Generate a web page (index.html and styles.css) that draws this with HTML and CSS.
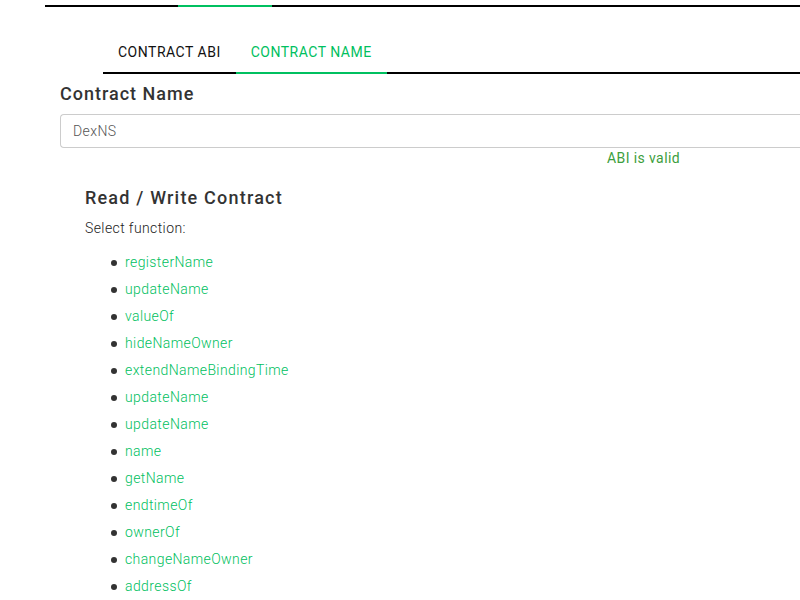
FILE: index.html
```html
<!DOCTYPE html>
<html>
<head>
<meta charset="utf-8">
<link rel="stylesheet" href="styles.css">
</head>
<body>
<div class="topbar"><span class="topbar-active"></span></div>
<div class="page">
  <nav class="tabs">
    <a class="tab">CONTRACT ABI</a>
    <a class="tab tab-active">CONTRACT NAME</a>
  </nav>
  <h2 class="label">Contract Name</h2>
  <div class="input">DexNS</div>
  <div class="valid">ABI is valid</div>
  <section class="contract">
    <h3 class="contract-title">Read / Write Contract</h3>
    <p class="select">Select function:</p>
    <ul class="funcs">
      <li><a>registerName</a></li>
      <li><a>updateName</a></li>
      <li><a>valueOf</a></li>
      <li><a>hideNameOwner</a></li>
      <li><a>extendNameBindingTime</a></li>
      <li><a>updateName</a></li>
      <li><a>updateName</a></li>
      <li><a>name</a></li>
      <li><a>getName</a></li>
      <li><a>endtimeOf</a></li>
      <li><a>ownerOf</a></li>
      <li><a>changeNameOwner</a></li>
      <li><a>addressOf</a></li>
    </ul>
  </section>
</div>
</body>
</html>
```
FILE: styles.css
```css
html, body {
  margin: 0;
  padding: 0;
  background: #fff;
  overflow: hidden;
}
body {
  font-family: Roboto, "Liberation Sans", sans-serif;
  font-weight: 300;
  font-size: 14px;
  letter-spacing: 0.4px;
  color: #222;
  width: 800px;
  height: 600px;
}
.topbar {
  margin: 5px 0 0 45px;
  height: 2px;
  background: #000;
  display: flex;
}
.topbar-active {
  margin-left: 133px;
  width: 94px;
  background: #00c060;
}
.page {
  padding-left: 60px;
}
.tabs {
  margin: 31px 0 0 43px;
  display: flex;
  border-bottom: 2px solid #000;
  height: 34px;
}
.tab {
  padding: 6px 15px 0 15px;
  font-size: 14px;
  font-weight: 400;
  letter-spacing: 0.5px;
  color: #111;
  line-height: 17px;
  border-bottom: 2px solid transparent;
  margin-bottom: -2px;
}
.tab-active {
  color: #00c060;
  border-bottom-color: #00c060;
}
.label {
  margin: 8px 0 0 0;
  font-size: 18px;
  font-weight: 500;
  letter-spacing: 1px;
  color: #333;
  line-height: 24px;
}
.input {
  margin-top: 8px;
  width: 760px;
  height: 32px;
  box-sizing: content-box;
  border: 1px solid #ccc;
  border-right: none;
  border-radius: 4px 0 0 4px;
  padding: 0 0 0 12px;
  line-height: 32px;
  font-size: 14px;
  color: #555;
}
.valid {
  margin: 1px 0 0 547px;
  color: #3d9e3d;
  font-weight: 400;
  font-size: 14px;
  line-height: 18px;
}
.contract {
  padding-left: 25px;
}
.contract-title {
  margin: 19px 0 0 0;
  font-size: 18px;
  font-weight: 500;
  letter-spacing: 1.2px;
  color: #333;
  line-height: 24px;
}
.select {
  margin: 9px 0 0 0;
  line-height: 18px;
}
.funcs {
  margin: 16px 0 0 0;
  padding-left: 26px;
  list-style: none;
}
.funcs li {
  height: 27px;
  line-height: 18px;
  color: #333;
  display: flex;
  align-items: center;
  align-self: flex-start;
}
.funcs li::before {
  content: "";
  width: 6px;
  height: 6px;
  border-radius: 50%;
  background: #333;
  margin-right: 8px;
  margin-bottom: 8px;
}
.funcs a {
  color: #00c060;
  line-height: 18px;
  align-self: flex-start;
}
```
